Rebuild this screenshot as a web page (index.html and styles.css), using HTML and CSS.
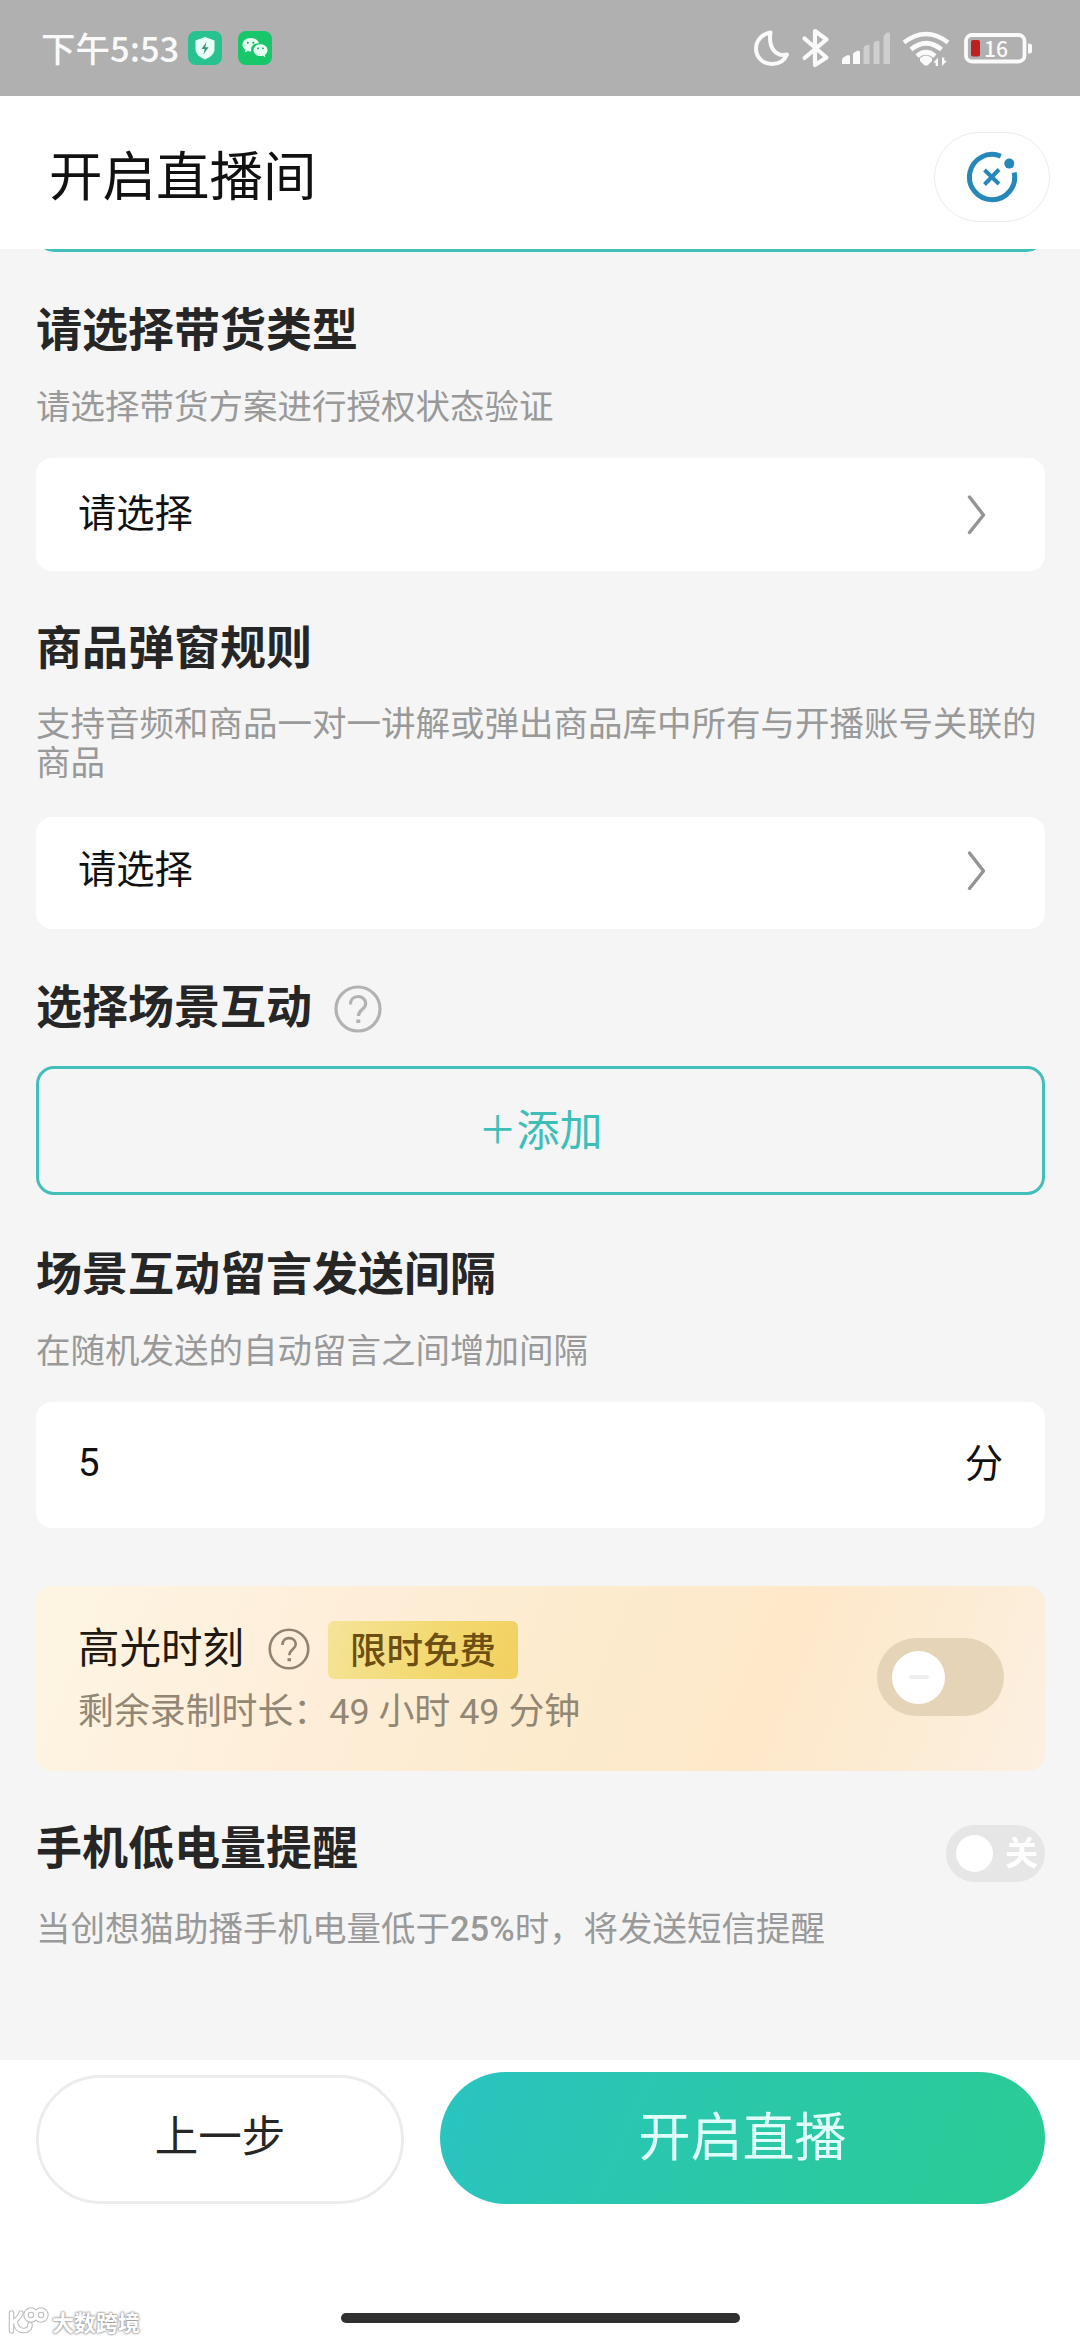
FILE: index.html
```html
<!DOCTYPE html>
<html lang="zh-CN">
<head>
<meta charset="utf-8">
<title>开启直播间</title>
<link rel="stylesheet" href="styles.css">
</head>
<body>
<div class="phone">
  <div class="status">
    <span class="clock">下午5:53</span>
    <svg class="app-icon" width="34" height="34" viewBox="0 0 34 34">
      <rect width="34" height="34" rx="8" fill="#27c290"/>
      <path d="M17 6l9.500 3.500v8.500c0 5-4 8-9.500 10.500C11.500 26 7.500 23 7.500 18V9.500z" fill="#e8fff7"/>
      <path d="M18.500 11l-5 7h3.300l-1.500 5.500 5.300-7.300h-3.300z" fill="#3d8f74"/>
    </svg>
    <svg class="app-icon wechat" width="34" height="34" viewBox="0 0 34 34">
      <rect width="34" height="34" rx="8" fill="#19c76b"/>
      <path d="M12.500 7C7.900 7 4.500 10 4.500 13.700c0 2.200 1.100 4 3 5.200l-.7 2.600 3-1.500c.9.2 1.800.4 2.700.4h.8c-.2-.6-.3-1.200-.3-1.800 0-3.600 3.200-6.300 7.300-6.300h.7C20.300 9.200 16.700 7 12.500 7z" fill="#e4fff0"/>
      <path d="M29.500 19.200c0-3.300-3.200-5.900-7-5.900s-7 2.600-7 5.900 3.200 5.900 7 5.900c.8 0 1.600-.1 2.300-.3l2.600 1.500-.6-2.300c1.600-1.100 2.700-2.800 2.700-4.800z" fill="#e4fff0"/>
      <g fill="#19a05a"><circle cx="9.800" cy="11.800" r="1"/><circle cx="15.400" cy="11.800" r="1"/><circle cx="20" cy="17.300" r=".9"/><circle cx="25" cy="17.300" r=".9"/></g>
    </svg>
    <svg class="system" width="290" height="44" viewBox="750 26 290 44" fill="none" stroke="#fafafa">
      <path d="M770.500 32.500c-8.500 1.500-14.500 8-14.500 16 0 9 7 15.500 16 15.500 7 0 12.500-3.500 15-9.500-11 2.500-19-6.500-16.500-22z" stroke-width="4" stroke-linejoin="round"/>
      <path d="M804.500 38.500l22 19-11.500 7.500V31l11.500 8.500-22 18.500" stroke-width="4.200" stroke-linejoin="round" stroke-linecap="round"/>
      <g stroke="none" fill="#fafafa">
        <path d="M842 64v-4q0-2 2-3l4-2q2 0 2 2v7zM853 64V54q0-1 2-2l3-1.500q2 0 2 1.500v12z"/>
        <g opacity=".42"><path d="M863.500 64V48q0-2 3-3t3 1v18zM873.500 64V44q0-2 3-3t3 1v22zM883.500 64V37q0-2 3-4t3.500 1v30z"/></g>
        <path d="M920 58q6-5 12 0v3l-4 4q-2 1-4 0l-4-4z"/>
        <path d="M938 57.500v8.500h-2.300v-3.200h-2.200zM942 66v-8.500h2.300v3.200h2.700z"/>
      </g>
      <path d="M904 42.500q22-17 44 0M911 49.500q15-12.500 30.500 0M917 56q9-7.500 18 0" stroke-width="4.600"/>
      <rect x="966" y="35" width="58.500" height="26.500" rx="6" stroke-width="3.800"/>
      <rect x="971" y="40" width="9" height="16.500" rx="2" fill="#bd1f22" stroke="none"/>
      <path d="M1028 43.500q4 0 4 2v6q0 2-4 2z" fill="#fafafa" stroke="none"/>
      <text class="battery-text" x="984" y="56.500" fill="#fafafa" stroke="none">16</text>
    </svg>
  </div>

  <header class="header">
    <h1 class="title">开启直播间</h1>
    <div class="capsule">
      <svg width="54" height="54" viewBox="-27 -27 54 54" fill="none" stroke="#2688b8">
        <path d="M8.800-20.800A22.600 22.600 0 1 0 22.200-4.500" stroke-width="5"/>
        <circle cx="17.300" cy="-13.400" r="5" fill="#2688b8" stroke="none"/>
        <path d="M-7.500-7L7 7M7-7.500L-7.500 7.500" stroke-width="4"/>
      </svg>
    </div>
  </header>

  <main class="content">
    <div class="previous-box"></div>

    <h2 class="heading first">请选择带货类型</h2>
    <p class="hint">请选择带货方案进行授权状态验证</p>
    <div class="field select">
      <span>请选择</span>
      <svg width="20" height="42" viewBox="0 0 20 42" fill="none" stroke="#949494" stroke-width="3.400" stroke-linecap="round" stroke-linejoin="round"><path d="M3.500 3L17.500 21 3.500 38.500"/></svg>
    </div>

    <h2 class="heading">商品弹窗规则</h2>
    <p class="hint tight">支持音频和商品一对一讲解或弹出商品库中所有与开播账号关联的商品</p>
    <div class="field select second">
      <span>请选择</span>
      <svg width="20" height="42" viewBox="0 0 20 42" fill="none" stroke="#949494" stroke-width="3.400" stroke-linecap="round" stroke-linejoin="round"><path d="M3.500 3L17.500 21 3.500 38.500"/></svg>
    </div>

    <div class="heading-row">
      <h2 class="heading plain">选择场景互动</h2>
      <svg class="help" width="48" height="48" viewBox="0 0 48 48" fill="none" stroke="#b2b2b2" stroke-width="3.200"><circle cx="24" cy="24" r="22"/><path d="M16.500 19.500c0-5 3.200-8 7.500-8s7.700 2.900 7.700 7c0 6-7.300 6.200-7.300 12.500"/><path d="M24.300 34.500v3.500" stroke-width="4"/></svg>
    </div>
    <button class="add"><span class="plus">＋</span>添加</button>

    <h2 class="heading gap">场景互动留言发送间隔</h2>
    <p class="hint">在随机发送的自动留言之间增加间隔</p>
    <div class="field interval">
      <span class="number">5</span>
      <span>分</span>
    </div>

    <section class="highlight">
      <div class="highlight-info">
        <div class="highlight-row">
          <span class="highlight-title">高光时刻</span>
          <svg width="42" height="42" viewBox="0 0 48 48" fill="none" stroke="#8e8470" stroke-width="3"><circle cx="24" cy="24" r="22"/><path d="M16.500 19.500c0-5 3.200-8 7.500-8s7.700 2.900 7.700 7c0 6-7.300 6.200-7.300 12.500"/><path d="M24.300 34.500v3.500" stroke-width="4"/></svg>
          <span class="badge">限时免费</span>
        </div>
        <p class="remaining">剩余录制时长：<span class="latin">49 </span>小时<span class="latin"> 49 </span>分钟</p>
      </div>
      <div class="switch gold"><span class="knob"></span></div>
    </section>

    <div class="battery-row">
      <h2 class="heading plain">手机低电量提醒</h2>
      <div class="switch small"><span class="knob"></span><span class="off">关</span></div>
    </div>
    <p class="hint last">当创想猫助播手机电量低于<span class="percent">25%</span>时，将发送短信提醒</p>
  </main>

  <footer class="footer">
    <div class="actions">
      <button class="back">上一步</button>
      <button class="start">开启直播</button>
    </div>
    <div class="home-bar"></div>
    <div class="watermark">
      <svg width="42" height="30" viewBox="0 0 42 30" fill="none" stroke-linecap="round">
        <g stroke="#bcbcbc" stroke-width="5.500"><path d="M3.500 7v18M13 7q-2 6-8.500 9M7.500 16q1 9 9 8.500 6-1 5.500-6"/><circle cx="23" cy="9" r="5"/><circle cx="33" cy="9" r="5"/></g>
        <g stroke="#fff" stroke-width="3.400"><path d="M3.500 7v18M13 7q-2 6-8.500 9M7.500 16q1 9 9 8.500 6-1 5.500-6"/><circle cx="23" cy="9" r="5"/><circle cx="33" cy="9" r="5"/></g>
      </svg>
      <span>大数跨境</span>
    </div>
  </footer>
</div>
</body>
</html>
```
FILE: styles.css
```css
* { box-sizing: border-box; }
body {
  margin: 0;
  background: #fff;
  font-family: "Noto Sans CJK SC", sans-serif;
  color: #111;
}
h1, h2, p { margin: 0; font-weight: 400; }
button { font: inherit; padding: 0; }
svg { display: block; flex: none; }
.phone {
  position: relative;
  width: 1080px;
  height: 2340px;
  display: flex;
  flex-direction: column;
  overflow: hidden;
}

/* status bar */
.status {
  height: 96px;
  flex: none;
  display: flex;
  align-items: center;
  padding: 0 40px 0 41px;
  background: #b0b0b0;
  color: #fafafa;
}
.clock {
  width: 147px;
  margin-top: -2px;
  font-size: 34.5px;
  font-weight: 500;
  line-height: 40px;
  white-space: nowrap;
}
.wechat { margin-left: 16px; }
.system { margin-left: auto; }
.battery-text { font: 500 21px "Noto Sans CJK SC", sans-serif; }

/* title bar */
.header {
  height: 153px;
  flex: none;
  display: flex;
  align-items: center;
  justify-content: space-between;
  padding: 0 30px 0 49px;
  background: #fff;
}
.title {
  font-size: 53.500px;
  line-height: 70px;
}
.capsule {
  display: flex;
  align-items: center;
  justify-content: center;
  width: 116px;
  height: 90px;
  margin-top: 9px;
  border: 1.5px solid #ececec;
  border-radius: 45px;
}

/* form */
.content {
  height: 1811px;
  flex: none;
  padding: 0 35px 0 36px;
  background: #f5f5f5;
  overflow: hidden;
}
.previous-box {
  height: 60px;
  margin-top: -57px;
  border: 3px solid #43bfb9;
  border-radius: 18px;
}
.heading {
  margin-top: 47px;
  padding-bottom: 3px;
  font-size: 46px;
  font-weight: 700;
  line-height: 53px;
  color: #262626;
}
.heading.first { margin-top: 48px; }
.heading.gap { margin-top: 49px; }
.heading.plain { margin-top: 0; }
.hint {
  margin-top: 29px;
  font-size: 34.5px;
  line-height: 39px;
  color: #999;
}
.hint.tight { margin-top: 28px; }
.hint.last { margin-top: 25px; }
.field {
  display: flex;
  align-items: center;
  justify-content: space-between;
  margin-top: 34px;
  padding: 0 42px;
  border-radius: 16px;
  background: #fff;
  font-size: 38.300px;
  line-height: 50px;
}
.select { height: 113px; padding-right: 59px; }
.select span { margin-top: -8px; }
.select.second { height: 112px; margin-top: 37px; padding-bottom: 4px; }
.interval { height: 126px; }
.interval span { margin-top: -9px; }
.interval .number { margin-top: -5px; font-family: Roboto, sans-serif; }
.heading-row {
  display: flex;
  align-items: flex-start;
  gap: 22px;
  margin-top: 48px;
}
.help { margin-top: 8px; }
.add {
  display: flex;
  align-items: center;
  justify-content: center;
  width: 100%;
  height: 129px;
  margin-top: 33px;
  padding-bottom: 7px;
  border: 3px solid #43bfb9;
  border-radius: 18px;
  background: transparent;
  color: #3dbfb8;
  font-size: 43px;
  line-height: 56px;
}
.plus { font-size: 38px; }

/* highlight card */
.highlight {
  display: flex;
  justify-content: space-between;
  height: 185px;
  margin-top: 58px;
  padding: 35px 41px 0 42px;
  border-radius: 16px;
  background: linear-gradient(112deg, #fdf5e3 0%, #feeed9 30%, #fcebcd 52%, #fee8ca 72%, #fcecd4 86%, #fdf0e2 100%);
}
.highlight-row { display: flex; align-items: center; height: 58px; }
.highlight-title {
  width: 190px;
  margin-top: -11px;
  font-size: 41.500px;
  line-height: 50px;
  color: #201a10;
}
.highlight-row svg { margin-top: -3px; }
.badge {
  width: 190px;
  height: 58px;
  margin-left: 18px;
  border-radius: 6px;
  background: linear-gradient(110deg, #f5e49a, #f3d970 55%, #f2d060);
  color: #6d4f14;
  font-size: 36.500px;
  font-weight: 500;
  line-height: 56px;
  text-align: center;
}
.remaining {
  margin-top: 9px;
  font-size: 35.900px;
  line-height: 40px;
  color: #918774;
  white-space: nowrap;
}
.latin { font-family: Roboto, sans-serif; white-space: pre; }
.switch { display: flex; align-items: center; flex: none; border-radius: 40px; }
.knob { border-radius: 50%; background: #fff; flex: none; }
.gold {
  width: 127px;
  height: 78px;
  margin-top: 17px;
  padding-left: 15px;
  background: #e5d4b8;
}
.gold .knob { display: flex; align-items: center; justify-content: center; width: 53px; height: 53px; }
.gold .knob::before { content: ""; width: 20px; height: 4px; border-radius: 2px; background: #eeeeec; }

/* low battery reminder */
.battery-row {
  display: flex;
  justify-content: space-between;
  align-items: flex-start;
  height: 64px;
  margin-top: 47px;
}
.small {
  width: 99px;
  height: 57px;
  margin-top: 7px;
  padding-left: 10px;
  background: #e6e6e6;
}
.small .knob { width: 37px; height: 37px; }
.off {
  margin: -5px 0 0 12px;
  color: #fff;
  font-size: 33px;
  font-weight: 700;
  line-height: 40px;
}
.percent { font-family: Roboto, sans-serif; font-weight: 500; }

/* bottom actions */
.footer { position: relative; height: 280px; background: #fff; }
.actions {
  display: flex;
  align-items: flex-end;
  gap: 36px;
  height: 144px;
  padding: 0 35px 0 36px;
}
.back {
  width: 368px;
  height: 129px;
  border: 3px solid #ececec;
  border-radius: 65px;
  background: #fff;
  color: #262626;
  font-size: 43.500px;
  line-height: 56px;
  padding-bottom: 11px;
}
.start {
  flex: 1;
  height: 132px;
  border: 0;
  border-radius: 66px;
  background: linear-gradient(115deg, #29c4c1, #2ac8a8 50%, #2acc94);
  color: #e0fffa;
  font-size: 52px;
  line-height: 66px;
  padding-bottom: 9px;
}
.home-bar {
  width: 399px;
  height: 10px;
  margin: 109px auto 0;
  border-radius: 5px;
  background: #303030;
}
.watermark {
  position: absolute;
  left: 8px;
  bottom: 4px;
  display: flex;
  align-items: center;
  gap: 2px;
  color: #fff;
  font-size: 22px;
  font-weight: 700;
  line-height: 28px;
  text-shadow: 0 0 2px #999, 0 0 2px #999, 0 0 3px #aaa;
}
```
